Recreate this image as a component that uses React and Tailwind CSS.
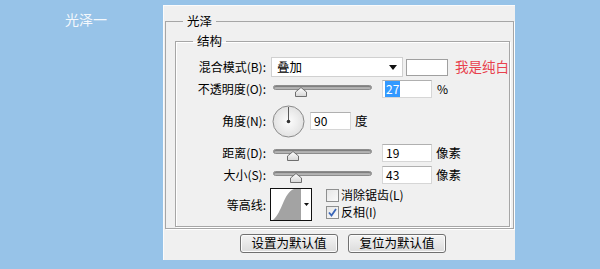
const Slider = ({ thumbLeft }) => (
    <div className="relative ml-[2px] w-[99px] h-[18px]">
        <div className="absolute left-0 right-0 top-[5px] h-[5px] rounded-full border border-[#8c8c8c] bg-[#b4b4b4] shadow-[inset_0_1px_1px_#7a7a7a]"></div>
        <svg className={`absolute top-[7px] ${thumbLeft}`} width="12" height="10" viewBox="0 0 12 10">
            <defs>
                <linearGradient id="thumbg" x1="0" y1="0" x2="0" y2="1">
                    <stop offset="0" stopColor="#ffffff" />
                    <stop offset="1" stopColor="#d6d6d6" />
                </linearGradient>
            </defs>
            <path d="M6 0.5 L11.5 5 L11.5 9.5 L0.5 9.5 L0.5 5 Z" fill="url(#thumbg)" stroke="#6f6f6f" />
        </svg>
    </div>
);

const NumBox = ({ value, className = "w-[50px]", selected }) => (
    <div className={`h-[18px] bg-white border border-[#d6d6d6] border-t-[#b0b0b0] flex items-center pl-[2px] text-[12px] leading-none ${className}`}>
        {selected ? (
            <span className="bg-[#3399ff] text-white px-[1px] py-[2px]">{value}</span>
        ) : (
            <span className="px-[1px]">{value}</span>
        )}
    </div>
);

const Label = ({ children }) => (
    <div className="w-[90px] text-right text-[12px] leading-none text-black">{children}</div>
);

const Checkbox = ({ checked, label }) => (
    <div className="flex items-center h-[16px]">
        <div className="w-[13px] h-[13px] border border-[#8e8f8f] bg-gradient-to-br from-[#e6e6e6] to-[#fafafa] flex items-center justify-center">
            {checked && (
                <svg width="11" height="11" viewBox="0 0 11 11">
                    <path d="M2 5.5 L4.5 8.5 L9 2" fill="none" stroke="#3a66b8" strokeWidth="1.8" />
                </svg>
            )}
        </div>
        <span className="ml-[2px] text-[12px] leading-none">{label}</span>
    </div>
);

const Button = ({ children, className }) => (
    <div className={`w-[98px] h-[19px] rounded-[3px] border border-[#707070] bg-gradient-to-b from-[#f4f4f4] to-[#dcdcdc] flex items-center justify-center text-[12.5px] leading-none shadow-[inset_0_0_0_1px_#fcfcfc] ${className}`}>
        {children}
    </div>
);

const App = () => {
    return (
        <div className="w-[600px] h-[269px] bg-[#97c3e8] flex font-['Noto_Sans_CJK_SC',sans-serif] text-black overflow-hidden">
            <div className="w-[163px] pl-[65px] pt-[10px] text-[14px] leading-[18px] text-[#f4f8fc]">光泽一</div>
            <div className="mt-[5px] w-[352px] h-[255px] bg-[#f0f0f0] border-l border-t border-[#fbfbfb] border-r-[#e0e0e0] border-b-[#e0e0e0] pl-[1px] pr-[1px] pt-[7px]">
                <fieldset className="border border-[#a6a6a6] shadow-[1px_1px_0_#fff] pb-[1px]">
                    <legend className="ml-[17px] px-[4px] text-[12.5px] leading-[16px]">光泽</legend>
                    <fieldset className="ml-[9px] mr-[3px] mt-[4px] border border-[#a6a6a6] shadow-[inset_1px_1px_0_#fff,1px_1px_0_#fff]">
                        <legend className="ml-[17px] px-[4px] text-[12.5px] leading-[16px]">结构</legend>
                        <div className="flex flex-col pt-[8px] pb-[5px]">
                            <div className="flex items-center h-[20px]">
                                <Label>混合模式(B):</Label>
                                <div className="ml-[5px] w-[132px] h-[20px] shrink-0 bg-white border border-[#d0d0d0] flex items-center justify-between pl-[5px] pr-[5px] text-[12.5px] leading-none">
                                    <span>叠加</span>
                                    <svg width="8" height="5" viewBox="0 0 8 5">
                                        <path d="M0 0 L8 0 L4 5 Z" fill="#111" />
                                    </svg>
                                </div>
                                <div className="ml-[3px] w-[42px] h-[17px] shrink-0 bg-white border border-[#a0a0a0]"></div>
                                <span className="ml-[7px] shrink-0 whitespace-nowrap text-[13.5px] leading-none text-[#e8414d]">我是纯白</span>
                            </div>
                            <div className="flex items-center h-[18px] mt-[3px]">
                                <Label>不透明度(O):</Label>
                                <div className="ml-[5px]"><Slider thumbLeft="left-[22px]" /></div>
                                <NumBox value="27" selected className="ml-[10px] w-[50px]" />
                                <span className="ml-[5px] text-[12px] leading-none">%</span>
                            </div>
                            <div className="flex items-center h-[32px] mt-[7px]">
                                <Label>角度(N):</Label>
                                <svg className="ml-[6px]" width="33" height="33" viewBox="0 0 33 33">
                                    <defs>
                                        <radialGradient id="dialg" cx="0.5" cy="0.5" r="0.5">
                                            <stop offset="0" stopColor="#fdfdfd" />
                                            <stop offset="1" stopColor="#e2e2e2" />
                                        </radialGradient>
                                    </defs>
                                    <circle cx="16.5" cy="16.5" r="15.5" fill="url(#dialg)" stroke="#8a8a8a" />
                                    <line x1="16.5" y1="16.5" x2="16.5" y2="2" stroke="#5a5a5a" strokeWidth="1" />
                                    <circle cx="16.5" cy="16.5" r="1.8" fill="#333" />
                                </svg>
                                <NumBox value="90" className="ml-[5px] w-[41px]" />
                                <span className="ml-[4px] text-[12.5px] leading-none">度</span>
                            </div>
                            <div className="flex items-center h-[18px] mt-[7px]">
                                <Label>距离(D):</Label>
                                <div className="ml-[5px]"><Slider thumbLeft="left-[14px]" /></div>
                                <NumBox value="19" className="ml-[10px] w-[50px]" />
                                <span className="ml-[4px] text-[12.5px] leading-none">像素</span>
                            </div>
                            <div className="flex items-center h-[18px] mt-[4px]">
                                <Label>大小(S):</Label>
                                <div className="ml-[5px]"><Slider thumbLeft="left-[17px]" /></div>
                                <NumBox value="43" className="ml-[10px] w-[50px]" />
                                <span className="ml-[4px] text-[12.5px] leading-none">像素</span>
                            </div>
                            <div className="flex items-center h-[33px] mt-[4px]">
                                <Label>等高线:</Label>
                                <div className="ml-[4px] w-[42px] h-[33px] border border-[#111] bg-white flex">
                                    <svg width="30" height="31" viewBox="0 0 30 31">
                                        <path d="M2 31 C 11 24, 13 3, 23 0 L 30 0 L 30 31 Z" fill="#a3a3a3" />
                                    </svg>
                                    <div className="flex-1 flex items-center justify-center">
                                        <svg width="5" height="3" viewBox="0 0 5 3">
                                            <path d="M0 0 L5 0 L2.5 3 Z" fill="#111" />
                                        </svg>
                                    </div>
                                </div>
                                <div className="ml-[14px] flex flex-col gap-[1px] -mt-[2px]">
                                    <Checkbox label="消除锯齿(L)" />
                                    <Checkbox checked label="反相(I)" />
                                </div>
                            </div>
                        </div>
                    </fieldset>
                </fieldset>
                <div className="flex mt-[5px] pl-[75px] gap-[10px]">
                    <Button>设置为默认值</Button>
                    <Button>复位为默认值</Button>
                </div>
            </div>
        </div>
    );
};

export default App;
